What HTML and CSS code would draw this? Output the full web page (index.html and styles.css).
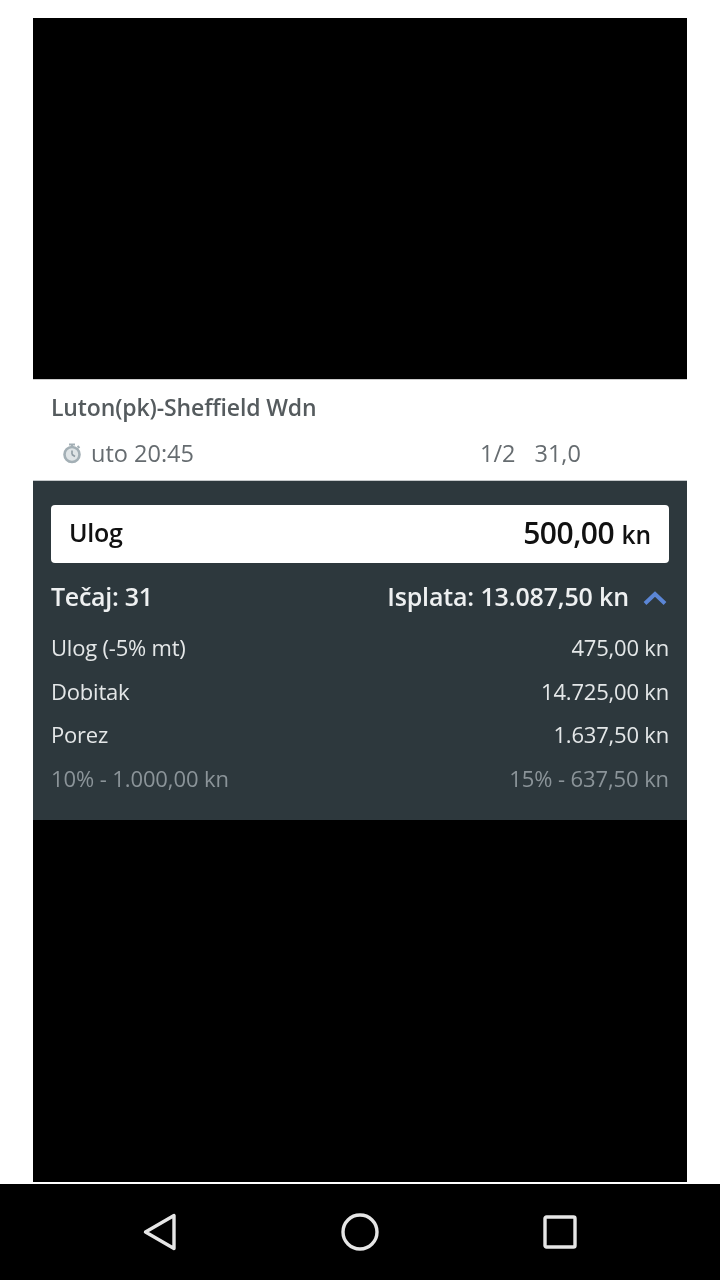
FILE: index.html
```html
<!DOCTYPE html>
<html lang="hr">
<head>
  <meta charset="UTF-8">
  <title>Listić</title>
  <meta name="viewport" content="width=device-width, initial-scale=1.0">
  <link rel="stylesheet" href="styles.css">
</head>
<body>

  <div class="screen">
    <div class="shot">
      <div class="black black-top"></div>

      <div class="match">
        <div class="match-name">Luton(pk)-Sheffield Wdn</div>
        <div class="match-info">
          <div class="match-time">
            <svg class="timer" width="20" height="22" viewBox="0 0 20 22">
              <circle cx="10" cy="12.5" r="7.5" fill="#dfe4e6" stroke="#a3afb5" stroke-width="2.6"/>
              <path d="M10 12.5V8.5M10 12.5l3 2" fill="none" stroke="#8f9ca3" stroke-width="1.6"/>
              <path d="M7 2.5h6M10 2.5v2.5M15.5 4l2 2" fill="none" stroke="#a3afb5" stroke-width="2"/>
            </svg>
            <span>uto 20:45</span>
          </div>
          <div class="match-odds">
            <span>1/2</span>
            <span>31,0</span>
          </div>
        </div>
      </div>

      <div class="panel">
        <div class="stake">
          <span class="stake-label">Ulog</span>
          <span class="stake-value">500,00 <small>kn</small></span>
        </div>

        <div class="totals">
          <span>Tečaj: 31</span>
          <span class="payout">
            Isplata: 13.087,50 kn
            <svg class="chevron" width="24" height="14" viewBox="0 0 24 14">
              <path d="M2 12.5L12 3l10 9.5" fill="none" stroke="#5b86d6" stroke-width="4"/>
            </svg>
          </span>
        </div>

        <div class="row"><span>Ulog (-5% mt)</span><span>475,00 kn</span></div>
        <div class="row"><span>Dobitak</span><span>14.725,00 kn</span></div>
        <div class="row"><span>Porez</span><span>1.637,50 kn</span></div>
        <div class="row row-muted"><span>10% - 1.000,00 kn</span><span>15% - 637,50 kn</span></div>
      </div>

      <div class="black black-bottom"></div>
    </div>
  </div>

  <div class="navbar">
    <svg width="34" height="38" viewBox="0 0 34 38">
      <path d="M2.5 19L31 2.5v33z" fill="none" stroke="#e6e6e6" stroke-width="3.4" stroke-linejoin="round"/>
    </svg>
    <svg width="38" height="38" viewBox="0 0 38 38">
      <circle cx="19" cy="19" r="17" fill="none" stroke="#e6e6e6" stroke-width="3.4"/>
    </svg>
    <svg width="34" height="34" viewBox="0 0 34 34">
      <rect x="2" y="2" width="30" height="30" rx="1.5" fill="none" stroke="#e6e6e6" stroke-width="3.4"/>
    </svg>
  </div>

</body>
</html>
```

FILE: styles.css
```css
:root {
  --panel: #2d383d;
  --muted: #8b9499;
}

* {
  box-sizing: border-box;
}

html, body {
  margin: 0;
  padding: 0;
}

body {
  width: 720px;
  height: 1280px;
  overflow: hidden;
  font-family: 'Open Sans', sans-serif;
  background: #000;
}

.screen {
  height: 1184px;
  padding: 18px 33px 2px;
  background: #fff;
}

.shot {
  width: 654px;
}

.black {
  background: #000;
}

.black-top {
  height: 361px;
}

.black-bottom {
  height: 362px;
}

/* the source is a blurry photo of a phone, so soften the text a bit */
.match-name,
.match-info,
.stake span,
.totals span,
.row span {
  filter: blur(0.5px);
}

.match {
  height: 102px;
  padding: 12px 18px 0;
  background: #fff;
  border-top: 1px solid #ccc;
  border-bottom: 1px solid #c4c8ca;
  color: #555b5e;
}

.match-name {
  font-size: 23px;
  font-weight: 600;
  line-height: 30px;
  letter-spacing: -0.13px;
}

.match-info {
  display: flex;
  justify-content: space-between;
  margin-top: 16px;
  font-size: 23.5px;
  line-height: 30px;
  color: #666c70;
}

.match-time {
  display: flex;
  align-items: center;
  gap: 9px;
  padding-left: 11px;
}

.match-odds {
  display: flex;
  gap: 19px;
  width: 189px;
}

.panel {
  height: 339px;
  padding: 24px 18px 0;
  background: var(--panel);
  color: #e4e7e8;
}

.stake {
  display: flex;
  justify-content: space-between;
  align-items: center;
  height: 58px;
  padding: 0 18px 4px;
  background: #fff;
  border-radius: 4px;
  color: #111;
}

.stake-label {
  font-size: 25px;
  font-weight: 600;
  letter-spacing: -0.3px;
}

.stake-value {
  font-size: 30px;
  font-weight: 600;
  letter-spacing: -0.5px;
}

.stake-value small {
  font-size: 24.5px;
  font-weight: 600;
  letter-spacing: 0;
}

.totals {
  display: flex;
  justify-content: space-between;
  align-items: center;
  height: 40px;
  margin-top: 13px;
  font-size: 25px;
  font-weight: 600;
  letter-spacing: -0.15px;
  color: #eef0f1;
}

.totals > span:first-child {
  letter-spacing: -0.3px;
}

.payout {
  display: flex;
  align-items: center;
  gap: 14px;
  margin-right: 2px;
}

.chevron {
  margin-top: 4px;
}

.row {
  display: flex;
  justify-content: space-between;
  height: 43.5px;
  font-size: 22px;
  line-height: 43.5px;
  letter-spacing: -0.2px;
}

.totals + .row {
  margin-top: 10px;
}

.row-muted {
  color: var(--muted);
  letter-spacing: -0.1px;
}

.navbar {
  display: flex;
  justify-content: space-between;
  align-items: center;
  height: 96px;
  padding: 0 143px;
  background: #000;
}
```
